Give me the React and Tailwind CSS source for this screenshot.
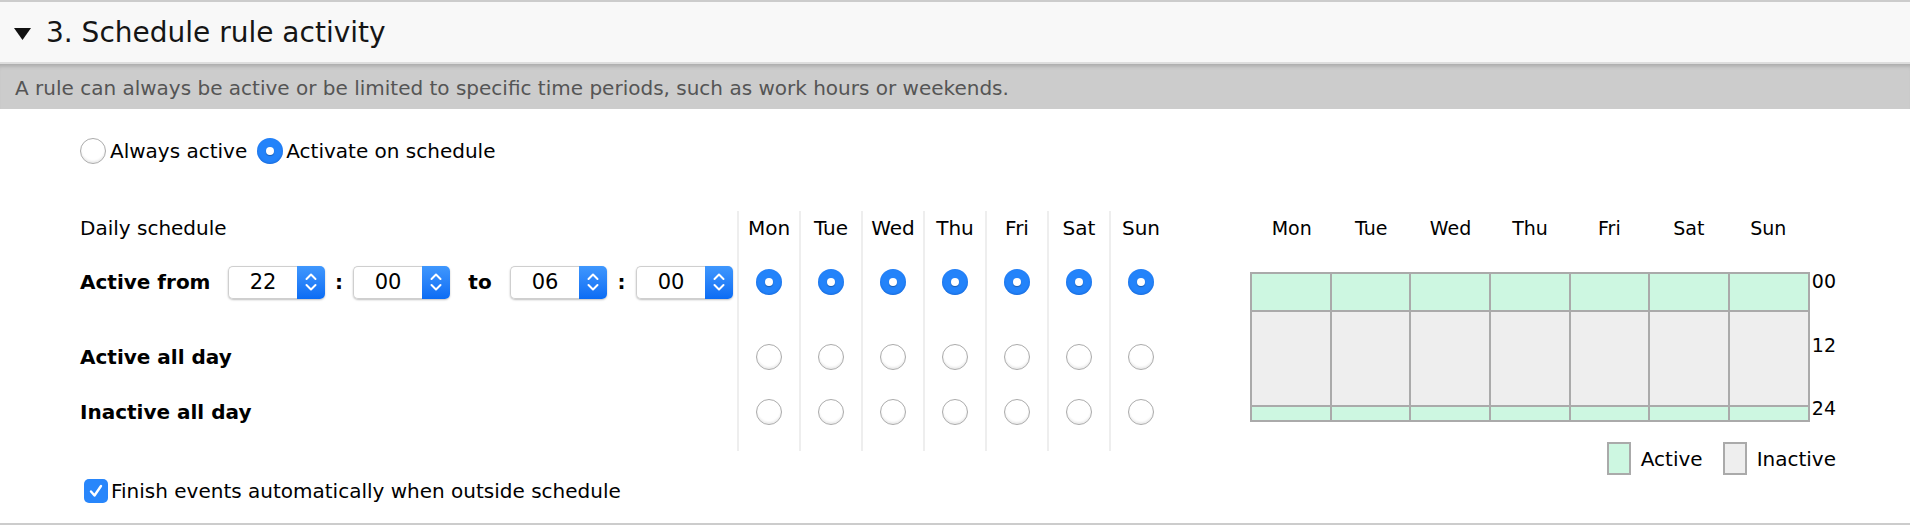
import React from 'react';

const days = ['Mon', 'Tue', 'Wed', 'Thu', 'Fri', 'Sat', 'Sun'];

function Radio({ checked }) {
  if (checked) {
    return (
      <span className="flex h-[26px] w-[26px] shrink-0 items-center justify-center rounded-full bg-[#2383fa] shadow-[inset_0_-1px_2px_rgba(0,60,160,0.35)]">
        <span className="h-[8px] w-[8px] rounded-full bg-white shadow-[0_1px_1px_rgba(0,0,0,0.3)]" />
      </span>
    );
  }
  return (
    <span className="h-[26px] w-[26px] shrink-0 rounded-full border border-[#ababab] bg-white shadow-[inset_0_-2px_2px_rgba(0,0,0,0.08)]" />
  );
}

function TimeSelect({ value }) {
  return (
    <div className="flex h-[33px] w-[97px] shrink-0 rounded-[5px] shadow-[0_1px_2px_rgba(0,0,0,0.25)]">
      <div className="flex flex-1 items-center justify-center rounded-l-[5px] border border-r-0 border-[#cfcfcf] bg-white text-[21px] text-black">
        {value}
      </div>
      <div className="flex w-[28px] items-center justify-center rounded-r-[5px] bg-gradient-to-b from-[#3f97fd] to-[#0a6cf4]">
        <svg width="14" height="22" viewBox="0 0 14 22" fill="none" stroke="white" strokeWidth="2" strokeLinecap="round" strokeLinejoin="round">
          <path d="M2.5 8 L7 3.5 L11.5 8" />
          <path d="M2.5 14 L7 18.5 L11.5 14" />
        </svg>
      </div>
    </div>
  );
}

export default function App() {
  return (
    <div className="h-[528px] w-full overflow-hidden bg-white font-['DejaVu_Sans',sans-serif] text-[20px] leading-[24px] text-black">
      <div className="h-[525px] border-y-2 border-[#cccccc]">
        {/* Section header */}
        <div className="flex h-[62px] items-center border-b-2 border-[#dddddd] bg-[#f8f8f8] pl-[14px] pt-[2px]">
          <svg width="17" height="12" viewBox="0 0 17 12" className="mt-[2px]">
            <polygon points="0,0 17,0 8.5,12" fill="#111" />
          </svg>
          <span className="ml-[15px] text-[28px] leading-[34px] text-[#151515]">3. Schedule rule activity</span>
        </div>

        {/* Description band */}
        <div className="flex h-[45px] items-center bg-[#cccccc] pl-[15px] pt-[3px] text-[#555555] shadow-[inset_0_5px_4px_-3px_rgba(0,0,0,0.18)]">
          A rule can always be active or be limited to specific time periods, such as work hours or weekends.
        </div>

        <div className="pl-[80px]">
          {/* Mode radios */}
          <div className="mt-[29px] flex h-[26px] items-center">
            <Radio checked={false} />
            <span className="ml-[4px]">Always active</span>
            <span className="ml-[10px]">
              <Radio checked />
            </span>
            <span className="ml-[3px]">Activate on schedule</span>
          </div>

          <div className="mt-[47px] flex items-start">
            {/* Left table */}
            <div className="flex">
              <div className="w-[657px]">
                <div className="flex h-[34px] items-center">Daily schedule</div>
                <div className="flex h-[74px] items-center">
                  <span className="w-[148px] font-bold">Active from</span>
                  <TimeSelect value="22" />
                  <span className="w-[28px] text-center font-bold">:</span>
                  <TimeSelect value="00" />
                  <span className="w-[60px] text-center font-bold">to</span>
                  <TimeSelect value="06" />
                  <span className="w-[29px] text-center font-bold">:</span>
                  <TimeSelect value="00" />
                </div>
                <div className="flex h-[76px] items-center font-bold">Active all day</div>
                <div className="flex h-[34px] items-center font-bold">Inactive all day</div>
              </div>
              {days.map((d) => (
                <div key={d} className="flex h-[240px] w-[62px] flex-col border-l-2 border-[#eeeeee]">
                  <div className="flex h-[34px] items-center justify-center">{d}</div>
                  <div className="flex h-[74px] items-center justify-center">
                    <Radio checked />
                  </div>
                  <div className="flex h-[76px] items-center justify-center">
                    <Radio checked={false} />
                  </div>
                  <div className="flex h-[34px] items-center justify-center">
                    <Radio checked={false} />
                  </div>
                </div>
              ))}
            </div>

            {/* Week overview */}
            <div className="ml-[79px] w-[586px]">
              <div className="flex h-[34px] w-[560px] items-center px-[2px]">
                {days.map((d) => (
                  <div key={d} className="flex-1 text-center text-[19px]">
                    {d}
                  </div>
                ))}
              </div>
              <div className="mt-[27px] flex">
                <div className="flex w-[560px] border-2 border-[#aaaaaa]">
                  {days.map((d, i) => (
                    <div key={d} className={`flex flex-1 flex-col ${i > 0 ? 'border-l-2 border-[#aaaaaa]' : ''}`}>
                      <div className="h-[36px] bg-[#cdf7e1]" />
                      <div className="h-[97px] border-y-2 border-[#aaaaaa] bg-[#eeeeee]" />
                      <div className="h-[13px] bg-[#cdf7e1]" />
                    </div>
                  ))}
                </div>
                <div className="flex h-[150px] flex-col justify-between pl-[2px] text-[19px] leading-[20px]">
                  <span className="-mt-[1px]">00</span>
                  <span>12</span>
                  <span className="mb-[4px]">24</span>
                </div>
              </div>
              <div className="mt-[20px] flex h-[33px] items-center justify-end">
                <span className="h-[33px] w-[24px] border-2 border-[#aaaaaa] bg-[#cdf7e1]" />
                <span className="ml-[10px]">Active</span>
                <span className="ml-[20px] h-[33px] w-[24px] border-2 border-[#aaaaaa] bg-[#eeeeee]" />
                <span className="ml-[10px]">Inactive</span>
              </div>
            </div>
          </div>

          {/* Finish events */}
          <div className="mt-[3px] flex h-[26px] items-center pl-[4px]">
            <span className="flex h-[24px] w-[24px] items-center justify-center rounded-[5px] bg-[#2886fb]">
              <svg width="16" height="16" viewBox="0 0 16 16" fill="none" stroke="white" strokeWidth="2.4" strokeLinecap="round" strokeLinejoin="round">
                <path d="M3 8.5 L6.5 12.5 L13 3" />
              </svg>
            </span>
            <span className="ml-[3px]">Finish events automatically when outside schedule</span>
          </div>
        </div>
      </div>
    </div>
  );
}
